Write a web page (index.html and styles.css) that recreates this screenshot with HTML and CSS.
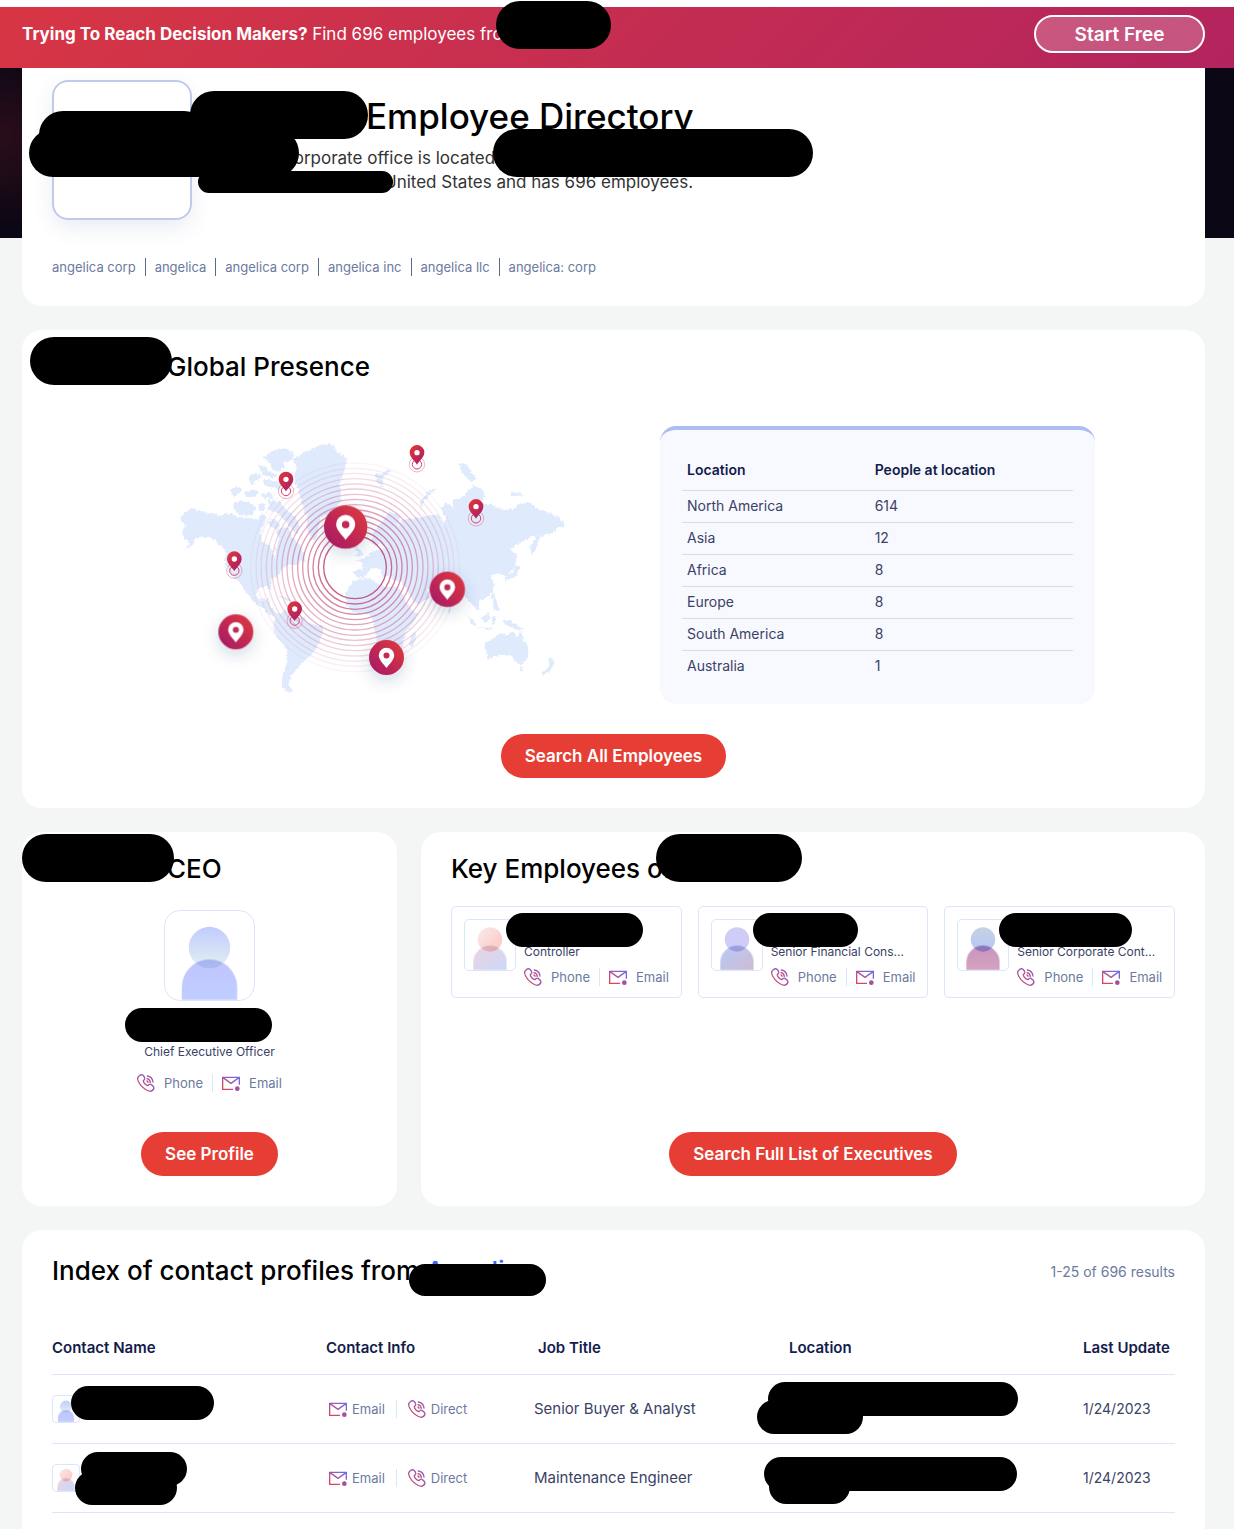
FILE: index.html
```html
<!DOCTYPE html>
<html lang="en">
<head>
    <meta charset="UTF-8">
    <meta name="viewport" content="width=device-width, initial-scale=1.0">
    <title>Employee Directory</title>
    <link rel="stylesheet" href="styles.css">
</head>
<body>
    <!-- Shared icons and gradients -->
    <svg class="defs" width="0" height="0" aria-hidden="true">
        <defs>
            <linearGradient id="icon-line" x1="0" y1="1" x2="1" y2="0">
                <stop offset="0" stop-color="#e2434f"/>
                <stop offset="0.5" stop-color="#a855a0"/>
                <stop offset="1" stop-color="#6a6cf0"/>
            </linearGradient>
            <linearGradient id="blue-head" x1="0" y1="0" x2="0" y2="1">
                <stop offset="0" stop-color="#c0ccfd"/>
                <stop offset="1" stop-color="#e4eff0"/>
            </linearGradient>
            <linearGradient id="blue-body" x1="0" y1="0" x2="0" y2="1">
                <stop offset="0" stop-color="#c0c6ff"/>
                <stop offset="1" stop-color="#c0ceff"/>
            </linearGradient>
            <linearGradient id="pink-head" x1="0" y1="0" x2="1" y2="1">
                <stop offset="0" stop-color="#f9eaec"/>
                <stop offset="1" stop-color="#fdc5c2"/>
            </linearGradient>
            <linearGradient id="pink-body" x1="0" y1="0" x2="1" y2="1">
                <stop offset="0" stop-color="#ecd4de"/>
                <stop offset="1" stop-color="#cbd8fa"/>
            </linearGradient>
            <linearGradient id="violet-body" x1="0" y1="0" x2="1" y2="1">
                <stop offset="0" stop-color="#b9cbf6"/>
                <stop offset="1" stop-color="#cdbbd4"/>
            </linearGradient>
            <linearGradient id="mauve-head" x1="0" y1="0" x2="0" y2="1">
                <stop offset="0" stop-color="#c8d2e2"/>
                <stop offset="1" stop-color="#b4c6f8"/>
            </linearGradient>
            <linearGradient id="mauve-body" x1="0" y1="0" x2="0" y2="1">
                <stop offset="0" stop-color="#c595be"/>
                <stop offset="1" stop-color="#d6a4c0"/>
            </linearGradient>
        </defs>
        <symbol id="phone" viewBox="0 0 54 54">
            <g fill="none" stroke="url(#icon-line)" stroke-width="4" stroke-linecap="round" stroke-linejoin="round">
                <path d="M7 5Q13 0 18 4Q24 10 23 15Q22 18 19 20Q18 24 24 30Q30 36 34 34Q38 29 42 31Q51 37 51 42Q49 50 40 52Q26 50 12 35Q1 21 2 12Q3 8 7 5Z"/>
                <path d="M31 6Q46 8 48 24M30 14Q39 16 40 25M30 21Q33 22 33 25"/>
            </g>
        </symbol>
        <symbol id="mail" viewBox="0 0 54 54">
            <path d="M33 46H2V10H52V32M3 11L27 28L51 11" fill="none" stroke="url(#icon-line)" stroke-width="4"/>
            <circle cx="46" cy="44" r="7" fill="#a0529f"/>
        </symbol>
        <symbol id="user-blue" viewBox="0 0 90 90">
            <circle cx="45" cy="37" r="21" fill="url(#blue-head)"/>
            <path class="shoulders" d="M17 90V77a28 28 0 0 1 56 0V90Z" fill="url(#blue-body)"/>
        </symbol>
        <symbol id="user-pink" viewBox="0 0 90 90">
            <circle cx="45" cy="35" r="22" fill="url(#pink-head)"/>
            <path class="shoulders" d="M15 90V76a30 30 0 0 1 60 0V90Z" fill="url(#pink-body)"/>
        </symbol>
        <symbol id="user-violet" viewBox="0 0 90 90">
            <circle cx="45" cy="35" r="22" fill="#cfccf7"/>
            <path class="shoulders" d="M15 90V76a30 30 0 0 1 60 0V90Z" fill="url(#violet-body)"/>
        </symbol>
        <symbol id="user-mauve" viewBox="0 0 90 90">
            <circle cx="45" cy="35" r="22" fill="url(#mauve-head)"/>
            <path class="shoulders" d="M15 90V76a30 30 0 0 1 60 0V90Z" fill="url(#mauve-body)"/>
        </symbol>
    </svg>

    <div class="banner">
        <p><strong>Trying To Reach Decision Makers?</strong> Find 696 employees from</p>
        <button class="start-free" type="button">Start Free</button>
        <span class="mask mask-banner"></span>
    </div>

    <main class="page">
        <section class="card intro">
            <div class="company">
                <div class="logo-box"></div>
                <div class="company-text">
                    <h1><span class="gap gap-title"></span>Employee Directory</h1>
                    <p><span class="gap gap-office"></span>corporate office is located<br><span class="gap gap-state"></span>United States and has 696 employees.</p>
                </div>
            </div>
            <ul class="aliases">
                <li>angelica corp</li>
                <li>angelica</li>
                <li>angelica corp</li>
                <li>angelica inc</li>
                <li>angelica llc</li>
                <li>angelica: corp</li>
            </ul>
            <span class="mask mask-title"></span>
            <span class="mask mask-logo"></span>
            <span class="mask mask-office"></span>
            <span class="mask mask-address"></span>
            <span class="mask mask-state"></span>
        </section>

        <section class="card presence">
            <h2><span class="gap gap-name"></span>Global Presence</h2>
            <span class="mask mask-presence"></span>
            <div class="presence-body">
                <svg class="map" viewBox="0 0 1230 810" role="img" aria-label="World map of employee locations">
                    <defs>
                        <linearGradient id="marker" x1="0" y1="1" x2="1" y2="0">
                            <stop offset="0.1" stop-color="#a81c64"/>
                            <stop offset="0.9" stop-color="#dc3741"/>
                        </linearGradient>
                        <linearGradient id="pin-fill" x1="0" y1="0" x2="0.8" y2="1">
                            <stop offset="0" stop-color="#e4393a"/>
                            <stop offset="1" stop-color="#ab1c65"/>
                        </linearGradient>
                        <filter id="coast" x="-5%" y="-5%" width="110%" height="110%">
                            <feTurbulence type="fractalNoise" baseFrequency="0.12" numOctaves="2" seed="4"/>
                            <feDisplacementMap in="SourceGraphic" scale="14" xChannelSelector="R" yChannelSelector="G"/>
                        </filter>
                        <filter id="soft" x="-60%" y="-60%" width="220%" height="240%">
                            <feDropShadow dx="0" dy="16" stdDeviation="22" flood-color="#2a4070" flood-opacity="0.2"/>
                        </filter>
                        <symbol id="place" viewBox="-30 -30 60 100" overflow="visible">
                            <g fill="none" stroke="#d6406a">
                                <circle cy="35" r="23" stroke-width="2" opacity="0.6"/>
                                <circle cy="35" r="14" stroke-width="3"/>
                            </g>
                            <path d="M0 36C-8 24-22 14-22-1A22 22 0 1 1 22-1C22 14 8 24 0 36Z" fill="url(#pin-fill)"/>
                            <circle r="8" fill="#fff"/>
                        </symbol>
                        <symbol id="office" viewBox="-52 -52 104 104" overflow="visible">
                            <circle r="52" fill="url(#marker)"/>
                            <path d="M0 31C-7 20-23 8-23-7A23 22 0 1 1 23-7C23 8 7 20 0 31Z" fill="#fff"/>
                            <circle cy="-6" r="9" fill="#c12a52"/>
                        </symbol>
                    </defs>

                    <g class="land" filter="url(#coast)">
                        <!-- Americas -->
                        <path d="M62 236L100 246L110 252L125 248L150 256L185 248L200 262L240 265L262 270L275 250L290 262L285 275L272 300L275 335L300 345L308 375L318 385L316 355L328 325L318 300L345 290L360 300L368 325L390 345L400 370L408 395L380 390L390 402L365 402L340 415L325 435L305 450L302 484L290 470L265 475L258 495L270 510L300 503L298 525L318 548L328 552L320 565L300 555L275 530L250 515L230 490L205 450L192 448L175 420L165 395L168 365L140 335L120 322L90 322L72 330L68 345L45 356L60 340L40 322L35 305L48 290L30 265L45 248Z"/>
                        <path d="M318 560L345 540L365 548L400 565L418 580L462 592L455 620L440 650L425 675L395 700L380 720L365 735L355 765L370 782L350 786L335 765L337 740L350 700L352 660L325 625L310 600L312 580Z"/>
                        <path d="M322 496L350 503L370 512L350 512Z"/>
                        <!-- Greenland and the Arctic islands -->
                        <path d="M368 90L400 68L450 45L490 42L495 60L532 88L520 130L510 165L515 210L480 250L450 265L440 320L430 335L412 300L410 265L395 215L385 180L372 140L380 110Z"/>
                        <path d="M280 82L310 60L345 55L375 70L365 90L340 98L345 112L325 125L305 120L302 100Z"/>
                        <path d="M264 105L285 110L305 128L322 132L315 145L280 135Z"/>
                        <path d="M238 138L262 128L275 145L258 152L244 168Z"/>
                        <path d="M280 146L325 156L338 172L322 178L280 164Z"/>
                        <path d="M180 182L200 168L215 178L210 190L188 198Z"/>
                        <path d="M188 222L215 210L240 218L258 232L248 255L215 258L192 240Z"/>
                        <path d="M220 190L248 178L268 184L255 200L232 202Z"/>
                        <path d="M270 192L300 188L310 204L284 206Z"/>
                        <path d="M262 224L284 218L286 240L272 244Z"/>
                        <path d="M296 210L330 215L350 240L375 258L392 290L380 315L355 285L335 262L320 245L296 240Z"/>
                        <path d="M292 275L312 268L332 285L320 296L300 290Z"/>
                        <!-- Europe and Asia -->
                        <path d="M549 422L577 418L580 398L560 392L590 380L604 366L640 358L650 350L632 342L618 350L604 340L608 310L632 276L658 246L678 252L690 262L682 285L700 270L740 264L780 256L806 254L820 285L828 262L814 235L828 216L846 232L850 208L880 200L910 166L938 180L946 200L928 220L960 222L1000 240L1032 236L1042 224L1078 216L1100 238L1130 244L1165 262L1190 288L1160 294L1148 310L1112 318L1100 350L1086 378L1080 352L1100 314L1060 332L1020 358L1042 378L1034 412L1004 440L985 430L962 435L974 465L965 490L940 510L928 508L930 540L912 530L896 510L880 494L860 510L838 548L822 500L800 480L770 476L780 500L742 526L720 500L706 470L690 452L668 450L662 436L640 440L630 420L612 412L600 420L585 440L560 444Z"/>
                        <path d="M548 346L562 348L580 372L575 380L556 380L562 366Z"/>
                        <path d="M614 130L640 132L650 118L664 124L640 142L638 172L624 160Z"/>
                        <path d="M750 240L752 215L772 186L802 174L778 196L762 214Z"/>
                        <path d="M865 100L888 102L905 126L920 145L905 155L876 130Z"/>
                        <path d="M1020 186L1045 188L1065 196L1025 198Z"/>
                        <path d="M1036 405L1050 410L1038 440L1004 452L1010 436L1030 428Z"/>
                        <!-- Africa -->
                        <path d="M525 490L550 452L600 444L612 456L640 468L688 475L708 515L728 545L746 545L730 580L705 610L700 645L670 700L640 700L622 650L615 600L604 560L580 552L550 550L528 522Z"/>
                        <path d="M724 616L738 606L736 632L724 654L718 640Z"/>
                        <!-- Oceania -->
                        <path d="M945 642L975 622L990 610L1010 616L1030 604L1040 624L1052 602L1062 630L1075 652L1072 688L1054 704L1036 696L1024 678L996 674L952 686Z"/>
                        <path d="M1046 710L1060 710L1053 724Z"/>
                        <path d="M1140 682L1156 698L1146 716L1118 736L1114 728L1136 712Z"/>
                        <path d="M888 550L915 576L920 590L904 582Z"/>
                        <path d="M920 590L950 594L980 596L950 600Z"/>
                        <path d="M932 566L956 546L960 564L946 580Z"/>
                        <path d="M966 560L980 558L972 586L966 578Z"/>
                        <path d="M992 570L1025 574L1062 600L1030 598Z"/>
                        <path d="M965 490L972 490L988 544L972 540Z"/>
                    </g>

                    <g class="rings">
                        <circle cx="555" cy="412" r="94" opacity="0.8"/>
                        <circle cx="555" cy="412" r="110" opacity="0.7"/>
                        <circle cx="555" cy="412" r="126" opacity="0.62"/>
                        <circle cx="555" cy="412" r="141" opacity="0.56"/>
                        <circle cx="555" cy="412" r="157" opacity="0.5"/>
                        <circle cx="555" cy="412" r="172" opacity="0.45"/>
                        <circle cx="555" cy="412" r="188" opacity="0.4"/>
                        <circle cx="555" cy="412" r="204" opacity="0.35"/>
                        <circle cx="555" cy="412" r="219" opacity="0.3"/>
                        <circle cx="555" cy="412" r="235" opacity="0.25"/>
                        <circle cx="555" cy="412" r="250" opacity="0.21"/>
                        <circle cx="555" cy="412" r="266" opacity="0.17"/>
                        <circle cx="555" cy="412" r="282" opacity="0.13"/>
                        <circle cx="555" cy="412" r="297" opacity="0.09"/>
                        <circle cx="555" cy="412" r="313" opacity="0.05"/>
                    </g>

                    <use href="#place" x="318" y="118" width="60" height="100"/>
                    <use href="#place" x="163" y="357" width="60" height="100"/>
                    <use href="#place" x="344" y="507" width="60" height="100"/>
                    <use href="#place" x="711" y="38" width="60" height="100"/>
                    <use href="#place" x="888" y="200" width="60" height="100"/>
                    <g filter="url(#soft)">
                        <use href="#office" x="462" y="226" width="130" height="130"/>
                        <use href="#office" x="145" y="553" width="105" height="105"/>
                        <use href="#office" x="779" y="425" width="106" height="106"/>
                        <use href="#office" x="597" y="630" width="105" height="105"/>
                    </g>
                </svg>

                <div class="locations">
                    <table>
                        <thead>
                            <tr><th>Location</th><th>People at location</th></tr>
                        </thead>
                        <tbody>
                            <tr><td>North America</td><td>614</td></tr>
                            <tr><td>Asia</td><td>12</td></tr>
                            <tr><td>Africa</td><td>8</td></tr>
                            <tr><td>Europe</td><td>8</td></tr>
                            <tr><td>South America</td><td>8</td></tr>
                            <tr><td>Australia</td><td>1</td></tr>
                        </tbody>
                    </table>
                </div>
            </div>
            <button class="btn" type="button">Search All Employees</button>
        </section>

        <div class="people">
            <section class="card ceo">
                <h2><span class="gap gap-name"></span>CEO</h2>
                <span class="mask mask-ceo"></span>
                <div class="ceo-profile">
                    <svg class="avatar avatar-large"><use href="#user-blue"/></svg>
                    <span class="mask mask-ceo-name"></span>
                    <p class="role">Chief Executive Officer</p>
                    <div class="contact">
                        <a href="#"><svg class="icon"><use href="#phone"/></svg>Phone</a>
                        <a href="#"><svg class="icon"><use href="#mail"/></svg>Email</a>
                    </div>
                </div>
                <button class="btn" type="button">See Profile</button>
            </section>

            <section class="card key">
                <h2>Key Employees of</h2>
                <span class="mask mask-key"></span>
                <div class="key-list">
                    <article class="employee">
                        <svg class="avatar avatar-medium"><use href="#user-pink"/></svg>
                        <div class="employee-info">
                            <p class="role">Controller</p>
                            <div class="contact">
                                <a href="#"><svg class="icon"><use href="#phone"/></svg>Phone</a>
                                <a href="#"><svg class="icon"><use href="#mail"/></svg>Email</a>
                            </div>
                        </div>
                        <span class="mask mask-employee mask-wide"></span>
                    </article>
                    <article class="employee">
                        <svg class="avatar avatar-medium"><use href="#user-violet"/></svg>
                        <div class="employee-info">
                            <p class="role">Senior Financial Cons...</p>
                            <div class="contact">
                                <a href="#"><svg class="icon"><use href="#phone"/></svg>Phone</a>
                                <a href="#"><svg class="icon"><use href="#mail"/></svg>Email</a>
                            </div>
                        </div>
                        <span class="mask mask-employee mask-short"></span>
                    </article>
                    <article class="employee">
                        <svg class="avatar avatar-medium"><use href="#user-mauve"/></svg>
                        <div class="employee-info">
                            <p class="role">Senior Corporate Cont...</p>
                            <div class="contact">
                                <a href="#"><svg class="icon"><use href="#phone"/></svg>Phone</a>
                                <a href="#"><svg class="icon"><use href="#mail"/></svg>Email</a>
                            </div>
                        </div>
                        <span class="mask mask-employee mask-middle"></span>
                    </article>
                </div>
                <button class="btn" type="button">Search Full List of Executives</button>
            </section>
        </div>

        <section class="card index">
            <div class="index-head">
                <h2>Index of contact profiles from <a href="#">Angelica</a></h2>
                <span class="results">1-25 of 696 results</span>
            </div>
            <span class="mask mask-index"></span>
            <table class="contacts">
                <thead>
                    <tr>
                        <th class="col-name">Contact Name</th>
                        <th class="col-info">Contact Info</th>
                        <th class="col-job">Job Title</th>
                        <th class="col-place">Location</th>
                        <th class="col-date">Last Update</th>
                    </tr>
                </thead>
                <tbody>
                    <tr>
                        <td>
                            <svg class="avatar avatar-small"><use href="#user-blue"/></svg>
                            <span class="mask mask-row-name"></span>
                        </td>
                        <td>
                            <div class="contact">
                                <a href="#"><svg class="icon"><use href="#mail"/></svg>Email</a>
                                <a href="#"><svg class="icon"><use href="#phone"/></svg>Direct</a>
                            </div>
                        </td>
                        <td>Senior Buyer &amp; Analyst</td>
                        <td>
                            <span class="mask mask-place-a"></span>
                            <span class="mask mask-place-b"></span>
                        </td>
                        <td class="date">1/24/2023</td>
                    </tr>
                    <tr>
                        <td>
                            <svg class="avatar avatar-small"><use href="#user-pink"/></svg>
                            <span class="mask mask-first"></span>
                            <span class="mask mask-last"></span>
                        </td>
                        <td>
                            <div class="contact">
                                <a href="#"><svg class="icon"><use href="#mail"/></svg>Email</a>
                                <a href="#"><svg class="icon"><use href="#phone"/></svg>Direct</a>
                            </div>
                        </td>
                        <td>Maintenance Engineer</td>
                        <td>
                            <span class="mask mask-place-c"></span>
                            <span class="mask mask-place-d"></span>
                        </td>
                        <td class="date">1/24/2023</td>
                    </tr>
                </tbody>
            </table>
        </section>
    </main>
</body>
</html>
```
FILE: styles.css
```css
* {
    box-sizing: border-box;
}

html {
    background: #f4f6f5;
}

body {
    margin: 0;
    min-height: 100vh;
    display: flex;
    flex-direction: column;
    padding-top: 7px;
    background: linear-gradient(#fff, #fff) no-repeat top / 100% 7px;
    font-family: Inter, sans-serif;
    color: #000;
}

h1, h2, p, ul {
    margin: 0;
    padding: 0;
}

button {
    font-family: inherit;
    cursor: pointer;
}

a {
    color: inherit;
    text-decoration: none;
}

table {
    width: 100%;
    border-collapse: collapse;
    table-layout: fixed;
}

th, td {
    padding: 0;
    text-align: left;
}

.defs {
    position: absolute;
}

/* Banner */
.banner {
    position: relative;
    display: flex;
    justify-content: space-between;
    align-items: center;
    padding: 8px 29px 15px 22px;
    background: linear-gradient(135deg, #d73644, #b3245e);
    color: #fff;
    font-size: 17px;
    line-height: 20px;
}

.start-free {
    width: 171px;
    height: 38px;
    border: 2px solid #fff;
    border-radius: 19px;
    background: rgba(255, 255, 255, 0.22);
    color: #fff;
    font-size: 19px;
    font-weight: 600;
}

/* Page */
.page {
    flex: 1;
    display: flex;
    flex-direction: column;
    gap: 24px;
    padding: 0 29px 0 22px;
    background: radial-gradient(circle at 0 70px, #2b0d1b 0, #0c0714 90px) no-repeat top / 100% 170px;
}

.card {
    position: relative;
    padding: 22px 30px 30px;
    border-radius: 20px;
    background: #fff;
}

h2 {
    font-size: 26px;
    line-height: 30px;
    font-weight: 500;
}

.gap {
    display: inline-block;
}

.gap-title { width: 154px; }
.gap-office { width: 72px; }
.gap-state { width: 172px; }
.gap-name { width: 115px; }

.btn {
    height: 44px;
    padding: 0 24px;
    border: 0;
    border-radius: 22px;
    background: #e63e34;
    color: #fff;
    font-size: 17px;
    line-height: 20px;
    font-weight: 600;
}

/* Company intro */
.intro {
    padding-top: 12px;
    border-radius: 0 0 20px 20px;
}

.company {
    display: flex;
    gap: 20px;
}

.logo-box {
    flex: none;
    width: 140px;
    height: 140px;
    border: 2px solid #c0cbea;
    border-radius: 16px;
    box-shadow: 0 8px 20px rgba(60, 80, 150, 0.1);
}

.company-text h1 {
    margin: 14px 0 8px;
    font-size: 35px;
    line-height: 44px;
    font-weight: 500;
}

.company-text p {
    color: #333;
    font-size: 17px;
    line-height: 24px;
}

.aliases {
    display: flex;
    margin-top: 38px;
    list-style: none;
    color: #6b7a9f;
    font-size: 13px;
    line-height: 18px;
}

.aliases li {
    padding: 0 9px;
    border-left: 1px solid #586a94;
}

.aliases li:first-child {
    padding-left: 0;
    border-left: 0;
}

/* Global presence */
.presence {
    text-align: center;
}

.presence h2 {
    text-align: left;
}

.presence-body {
    display: flex;
    justify-content: center;
    align-items: flex-start;
    gap: 80px;
    margin: 44px 0 30px;
    padding-right: 38px;
    padding-left: 76px;
}

.map {
    flex: 0 1 410px;
    margin-top: 4px;
}

.land {
    fill: #e0eafd;
}

.rings {
    fill: none;
    stroke: #b93466;
    stroke-width: 4px;
}

.locations {
    flex: 0 1 435px;
    padding: 22px;
    border-top: 4px solid #adbdf1;
    border-radius: 16px;
    background: #f8f9fe;
    color: #3a4266;
    font-size: 14px;
    line-height: 18px;
}

.locations th,
.locations td {
    height: 32px;
    padding: 0 5px;
    border-bottom: 1px solid #d9dce2;
}

.locations th {
    width: 52%;
    height: 38px;
    padding-bottom: 2px;
    color: #131c4b;
    font-weight: 600;
}

.locations th:first-child {
    width: 48%;
}

.locations tr:last-child td {
    border-bottom: 0;
}

/* CEO and key employees */
.people {
    display: grid;
    grid-template-columns: 375fr 784fr;
    gap: 24px;
}

.ceo,
.key {
    display: flex;
    flex-direction: column;
    min-height: 374px;
}

.ceo .btn,
.key .btn {
    align-self: center;
    margin-top: auto;
}

.ceo-profile {
    position: relative;
    display: flex;
    flex-direction: column;
    align-items: center;
    margin-top: 26px;
}

.avatar {
    display: block;
    flex: none;
    border: 1px solid #dbe5fb;
    background: #fff;
}

.avatar-large {
    width: 91px;
    height: 91px;
    border-radius: 16px;
}

.avatar-medium {
    width: 52px;
    height: 52px;
    border-radius: 5px;
}

.avatar-small {
    width: 28px;
    height: 28px;
    border-radius: 4px;
}

.shoulders {
    mix-blend-mode: multiply;
}

.role {
    color: #3a4266;
    font-size: 12px;
    line-height: 18px;
    white-space: nowrap;
}

.ceo .role {
    margin: 42px 0 13px;
}

.contact {
    display: flex;
    color: #6b7a9f;
    font-size: 13px;
    line-height: 18px;
}

.contact a {
    display: flex;
    align-items: center;
    gap: 9px;
}

.contact a + a {
    margin-left: 9px;
    padding-left: 9px;
    border-left: 1px solid #dbe5fb;
}

.icon {
    width: 18px;
    height: 18px;
}

.key-list {
    display: grid;
    grid-template-columns: repeat(3, 1fr);
    gap: 16px;
    margin-top: 22px;
}

.employee {
    position: relative;
    display: flex;
    gap: 8px;
    min-width: 0;
    height: 92px;
    padding: 12px;
    border: 1px solid #dbe5fb;
    border-radius: 5px;
}

.employee .role {
    margin: 24px 0 7px;
}

/* Contact index */
.index {
    flex: 1;
    padding-bottom: 16px;
    border-radius: 20px 20px 0 0;
}

.index-head {
    display: flex;
    justify-content: space-between;
    align-items: center;
    padding-top: 4px;
}

.index-head a {
    color: #3d66f5;
}

.results {
    color: #6b7a9f;
    font-size: 14px;
}

.contacts {
    margin-top: 35px;
    color: #3a4266;
    font-size: 15px;
}

.contacts th {
    height: 53px;
    border-bottom: 1px solid #dbe5fb;
    color: #131c4b;
    font-weight: 600;
}

.contacts td {
    position: relative;
    height: 69px;
    border-bottom: 1px solid #dbe5fb;
}

.contacts .date {
    font-size: 14px;
}

.contacts .contact {
    padding-left: 3px;
}

.contacts .contact a {
    gap: 5px;
}

.contacts .contact a + a {
    margin-left: 11px;
    padding-left: 11px;
}

.col-name { width: 274px; }
.col-info { width: 208px; }
.contacts .col-job { width: 255px; padding-left: 4px; }
.col-date { width: 92px; }

/* Black bars over private details */
.mask {
    position: absolute;
    z-index: 2;
    height: 48px;
    border-radius: 24px;
    background: #000;
}

.mask-banner { left: 496px; top: -6px; width: 115px; }
.mask-title { left: 168px; top: 23px; width: 178px; }
.mask-logo { left: 17px; top: 43px; width: 169px; }
.mask-office { left: 7px; top: 61px; width: 270px; }
.mask-address { left: 471px; top: 61px; width: 320px; }
.mask-state { left: 176px; top: 103px; width: 195px; height: 22px; }
.mask-presence { left: 8px; top: 7px; width: 142px; }
.mask-ceo { left: 0; top: 2px; width: 152px; }
.mask-key { left: 235px; top: 2px; width: 146px; }
.mask-index { left: 387px; top: 34px; width: 137px; height: 32px; }

.mask-ceo-name,
.mask-employee,
.contacts .mask {
    height: 34px;
    border-radius: 17px;
}

.mask-ceo-name { left: 73px; top: 98px; width: 147px; }
.mask-employee { left: 54px; top: 6px; }
.mask-wide { width: 137px; }
.mask-short { width: 105px; }
.mask-middle { width: 133px; }
.mask-row-name { left: 19px; top: 11px; width: 143px; }
.mask-first { left: 29px; top: 8px; width: 106px; }
.mask-last { left: 23px; top: 27px; width: 102px; }
.mask-place-a { left: -21px; top: 7px; width: 250px; }
.mask-place-b { left: -32px; top: 25px; width: 106px; }
.mask-place-c { left: -25px; top: 13px; width: 253px; }
.mask-place-d { left: -20px; top: 26px; width: 81px; }
```
